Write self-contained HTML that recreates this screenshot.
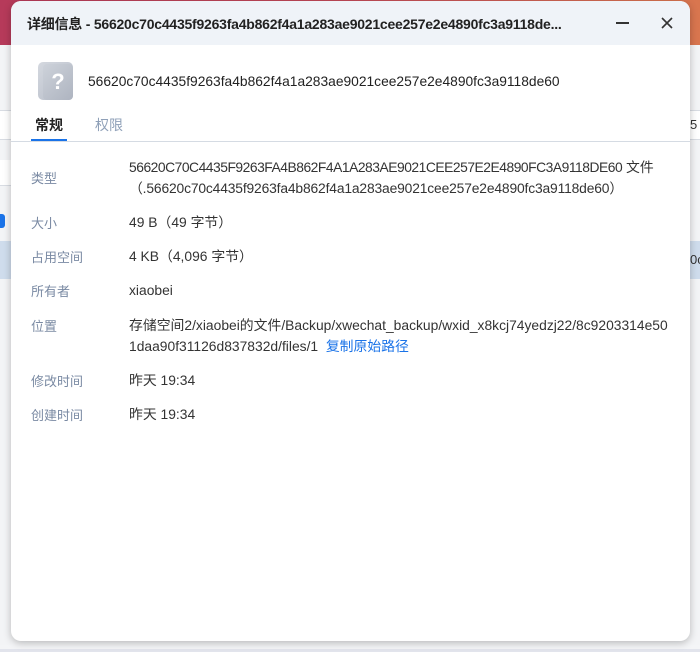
<!DOCTYPE html>
<html><head><meta charset="utf-8"><style>
body{margin:0;width:700px;height:652px;overflow:hidden;position:relative;background:#f4f5f7;font-family:"Liberation Sans","Noto Sans CJK SC",sans-serif;}
.bgtop{position:absolute;left:0;top:0;width:700px;height:45px;background:linear-gradient(90deg,#b63a5a,#c24a58 50%,#d9764f);}
.dlg{position:absolute;left:11px;top:1px;width:679px;height:640px;background:#fff;border-radius:10px;box-shadow:0 2px 8px rgba(0,0,0,.25);overflow:hidden;}
.tb{height:44px;background:#eff3f8;position:relative;}
.tb .t{position:absolute;left:16px;top:13px;font-size:14px;font-weight:bold;color:#222;white-space:nowrap;letter-spacing:-0.23px;}
.lbl{position:absolute;left:20px;font-size:13px;color:#7a8aa3;}
.val{position:absolute;left:118px;font-size:13.85px;color:#333;line-height:21px;white-space:nowrap;}
</style></head><body>
<div class="bgtop"></div>
<div style="position:absolute;left:0;top:45px;width:11px;height:600px;background:#f3f4f6"></div>
<div style="position:absolute;left:0;top:110px;width:11px;height:28px;background:#fff;border-top:1px solid #d8dce3;border-bottom:1px solid #d8dce3"></div>
<div style="position:absolute;left:0;top:160px;width:11px;height:25px;background:#fff;border-bottom:1px solid #d8dce3;font-size:13px;color:#333">&nbsp;</div>
<div style="position:absolute;left:0;top:214px;width:5px;height:14px;background:#1a73e8;border-radius:0 3px 3px 0"></div>
<div style="position:absolute;left:0;top:241px;width:11px;height:38px;background:#cfdcec"></div>
<div style="position:absolute;left:690px;top:45px;width:10px;height:600px;background:#f3f4f6"></div>
<div style="position:absolute;left:690px;top:110px;width:10px;height:28px;background:#fff;border-top:1px solid #d8dce3;border-bottom:1px solid #d8dce3;font-size:13px;line-height:28px;color:#333">5</div>
<div style="position:absolute;left:690px;top:241px;width:10px;height:38px;background:#cfdcec;font-size:13px;line-height:38px;color:#333">0c</div>
<div style="position:absolute;left:0;top:649px;width:700px;height:3px;background:#e2e4ec"></div>
<div class="dlg">
 <div class="tb"><div class="t">详细信息 - 56620c70c4435f9263fa4b862f4a1a283ae9021cee257e2e4890fc3a9118de...</div>
  <div style="position:absolute;left:605px;top:21px;width:13px;height:2px;background:#333"></div>
  <svg style="position:absolute;left:650px;top:16px" width="12" height="12"><path d="M1 1L11 11M11 1L1 11" stroke="#333" stroke-width="1.6"/></svg>
 </div>
 <div style="position:absolute;left:27px;top:61px;width:35px;height:38px;border-radius:5px;background:linear-gradient(135deg,#d4d8df,#b6bcc8);"></div>
 <div style="position:absolute;left:32px;top:63px;width:30px;height:36px;border-radius:4px;background:linear-gradient(135deg,#cdd2da,#aeb4c0);color:#fff;font-size:22px;font-weight:bold;text-align:center;line-height:36px;">?</div>
 <div style="position:absolute;left:77px;top:73px;font-size:13.8px;font-weight:500;color:#222">56620c70c4435f9263fa4b862f4a1a283ae9021cee257e2e4890fc3a9118de60</div>
 <div style="position:absolute;left:24px;top:114px;font-size:14px;font-weight:bold;color:#222">常规</div>
 <div style="position:absolute;left:84px;top:114px;font-size:14px;color:#8fa0b8">权限</div>
 <div style="position:absolute;left:20px;top:138px;width:36px;height:3px;background:#1a73e8"></div>
 <div style="position:absolute;left:0;top:140px;width:679px;height:1px;background:#d5dbe3"></div>
 <div class="lbl" style="top:167px">类型</div>
 <div class="val" style="top:156px"><span style="letter-spacing:-0.48px">56620C70C4435F9263FA4B862F4A1A283AE9021CEE257E2E4890FC3A9118DE60</span> 文件<br><span style="letter-spacing:-0.16px">（.56620c70c4435f9263fa4b862f4a1a283ae9021cee257e2e4890fc3a9118de60）</span></div>
 <div class="lbl" style="top:212px">大小</div><div class="val" style="top:211px">49 B（49 字节）</div>
 <div class="lbl" style="top:246px">占用空间</div><div class="val" style="top:245px">4 KB（4,096 字节）</div>
 <div class="lbl" style="top:280px">所有者</div><div class="val" style="top:279px">xiaobei</div>
 <div class="lbl" style="top:315px">位置</div>
 <div class="val" style="top:314px">存储空间2/xiaobei的文件/Backup/xwechat_backup/wxid_x8kcj74yedzj22/8c9203314e50<br>1daa90f31126d837832d/files/1 &nbsp;<span style="color:#1a73e8">复制原始路径</span></div>
 <div class="lbl" style="top:370px">修改时间</div><div class="val" style="top:369px">昨天 19:34</div>
 <div class="lbl" style="top:404px">创建时间</div><div class="val" style="top:403px">昨天 19:34</div>
</div>
</body></html>
